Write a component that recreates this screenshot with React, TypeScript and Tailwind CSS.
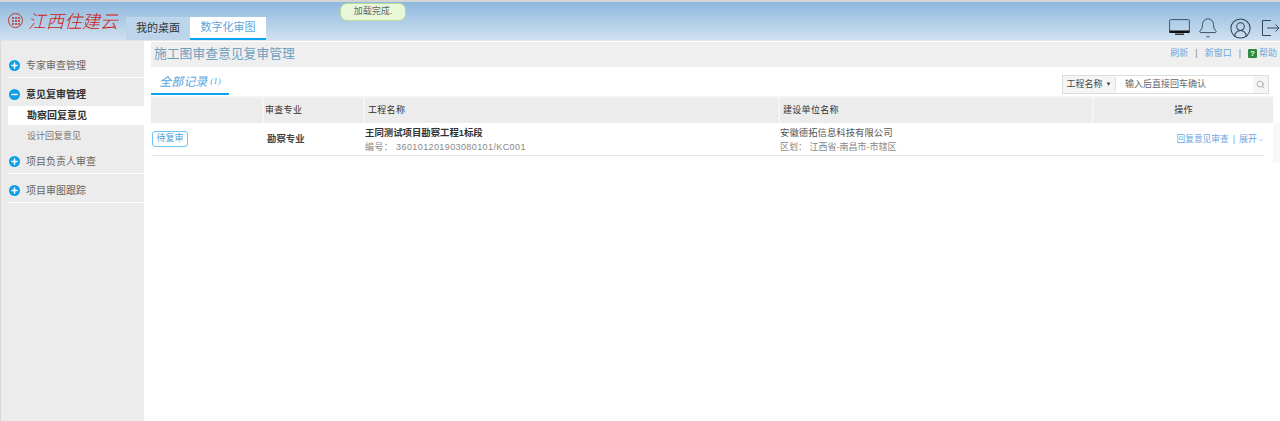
import { Bell, ChevronDown, CircleUserRound, Minus, Plus, Search } from "lucide-react";

const FONT = { fontFamily: '"Liberation Sans", "Noto Sans CJK SC", sans-serif' };

function NavHead({ label, open, line }: { label: string; open?: boolean; line?: boolean }) {
  const Icon = open ? Minus : Plus;
  return (
    <div className={line ? "mt-[4px] flex h-[25px] items-center gap-[6px] border-b border-white pl-[1px]" : "mt-[4px] flex h-[24px] items-center gap-[6px] pl-[1px]"}>
      <span className="flex h-[11px] w-[11px] items-center justify-center rounded-full bg-[#0d9ee6]">
        <Icon className="h-[9px] w-[9px] text-white" strokeWidth={4} />
      </span>
      <span className={open ? "text-[10px] font-bold text-[#333]" : "text-[10px] text-[#666]"}>{label}</span>
    </div>
  );
}

export default function App() {
  return (
    <div className="relative flex h-[421px] w-[1280px] flex-col overflow-hidden bg-white" style={FONT}>
      {/* Header */}
      <header className="flex h-[41px] shrink-0 border-t-2 border-b border-t-[#d5d5d5] border-b-[#dfe5ea] bg-gradient-to-b from-[#8fb8dd] to-[#cfe1f0]">
        <div className="flex w-[126px] items-center pb-[1px] pl-[8px]">
          <span className="flex h-[15px] w-[15px] items-center justify-center rounded-full border border-[#c0392b]">
            <span className="grid grid-cols-3 gap-[1px]">
              {[0, 1, 2, 3, 4, 5, 6, 7, 8].map((i) => (
                <span key={i} className="h-[2px] w-[2px] rounded-full bg-[#b5302a]" />
              ))}
            </span>
          </span>
          <span className="ml-[5px] text-[18px] italic text-[#cc1b10]" style={{ fontFamily: '"Noto Sans CJK SC", sans-serif', fontWeight: 300 }}>
            江西住建云
          </span>
        </div>
        <div className="mt-[15px] flex h-[23px] w-[64px] items-center justify-center bg-[#bcd5ea] text-[11px] text-[#333]">我的桌面</div>
        <div className="mt-[15px] flex h-[23px] w-[76px] items-center justify-center border-b-2 border-[#0aa5f0] bg-white text-[11px] text-[#5aa6dc]">
          数字化审图
        </div>
        <div className="ml-auto flex items-center pt-[14px]">
          <svg width="21" height="18" viewBox="0 0 21 18">
            <rect x="0.6" y="0.6" width="19.8" height="12.8" rx="1" fill="none" stroke="#3f566b" strokeWidth="1" />
            <rect x="0.5" y="11.5" width="20" height="2.5" fill="#111" />
            <rect x="6" y="14.5" width="9" height="1.5" fill="#333" />
          </svg>
          <Bell className="ml-[7px] h-[22px] w-[22px] text-[#34485c]" strokeWidth={1} />
          <CircleUserRound className="ml-[10px] h-[23px] w-[23px] text-[#34485c]" strokeWidth={1.1} />
          <svg className="ml-[9px]" width="19" height="18" viewBox="0 0 19 18" fill="none" stroke="#34485c" strokeWidth="1">
            <path d="M10 1.5H1.5V16.5H10" />
            <path d="M6 9H18M14.5 5.5L18 9L14.5 12.5" />
          </svg>
        </div>
      </header>

      <div className="flex min-h-0 flex-1">
        {/* Sidebar */}
        <aside className="w-[144px] shrink-0 border-l border-[#d9d9d9] bg-[#ececec] pt-[8px]">
          <div className="ml-[7px]">
            <NavHead label="专家审查管理" line />
            <NavHead label="意见复审管理" open />
            <div className="flex h-[19px] items-center bg-white pl-[19px] text-[10px] font-bold text-[#333]">勘察回复意见</div>
            <div className="flex h-[20px] items-center pt-[3px] pl-[19px] text-[9px] text-[#777]">设计回复意见</div>
            <NavHead label="项目负责人审查" line />
            <NavHead label="项目审图跟踪" line />
          </div>
        </aside>

        {/* Main */}
        <main className="ml-[7px] min-w-0 flex-1 pt-[1px]">
          <div className="flex h-[25px] items-center justify-between bg-[#efefef] px-[3px]">
            <h1 className="mb-[1px] text-[12.8px] text-[#6f9fc0]">施工图审查意见复审管理</h1>
            <div className="mb-[2px] flex items-center text-[9px] text-[#6ea5dd]">
              <span>刷新</span>
              <span className="mx-[7px] text-[#888]">|</span>
              <span>新窗口</span>
              <span className="mx-[7px] text-[#888]">|</span>
              <span className="mr-[2px] flex h-[9px] w-[9px] items-center justify-center rounded-[1px] bg-[#2e8b3d] text-[8px] font-bold text-white">?</span>
              <span>帮助</span>
            </div>
          </div>
          <div className="flex h-[28px] items-end justify-between">
            <div className="flex h-[28px] w-[78px] items-center justify-center border-b-[2px] border-[#0aa5f0] pt-[3px] text-[12px] italic text-[#5aa6dc]">
              全部记录<span className="ml-[3px] text-[9px]" style={{ fontFamily: '"Liberation Serif", serif' }}>(1)</span>
            </div>
            <div className="mr-[11px] mb-[1px] flex h-[19px] w-[207px] items-center border border-[#ddd] bg-[#f5f5f5] text-[9px]">
              <span className="flex w-[53px] items-center justify-center gap-[3px] border-r border-[#ddd] text-[#444]">
                工程名称<span className="text-[6px]">▼</span>
              </span>
              <span className="flex h-full flex-1 items-center bg-white pl-[9px] text-[#666]">输入后直接回车确认</span>
              <Search className="mx-[3px] h-[9px] w-[9px] text-[#999]" />
            </div>
          </div>
          <div className="mt-[1px] mr-[7px] grid h-[27px] grid-cols-[111px_101px_415px_314px_181px] items-center border-t-2 border-[#f4f4f4] bg-[#ececec] text-[9px] tracking-[0.3px] text-[#333]">
            <span className="h-full" />
            <span className="flex h-full items-center border-l-2 border-[#f4f4f4] pl-[1px]">审查专业</span>
            <span className="flex h-full items-center border-l-2 border-[#f4f4f4] pl-[3px]">工程名称</span>
            <span className="flex h-full items-center border-l-2 border-[#f4f4f4] pl-[3px]">建设单位名称</span>
            <span className="flex h-full items-center justify-center border-l-2 border-[#f4f4f4]">操作</span>
          </div>
          <div className="relative">
            <div className="mr-[16px] grid h-[33px] grid-cols-[116px_98px_415px_306px_178px] items-center border-b border-[#e8e8e8] pt-[1px] text-[9.4px]">
              <div className="mb-[2px] pl-[1px]">
                <span className="flex h-[16px] w-[36px] items-center justify-center rounded-[3px] border border-[#6cc5f2] text-[9px] text-[#4aa3dc]">待复审</span>
              </div>
              <span className="font-bold text-[#444]">勘察专业</span>
              <div className="flex flex-col gap-[3px]">
                <span className="font-bold leading-[13px] text-[#333]">王同测试项目勘察工程1标段</span>
                <span className="text-[9px] leading-[11px] tracking-[0.4px] text-[#888]">编号： 360101201903080101/KC001</span>
              </div>
              <div className="flex flex-col gap-[3px]">
                <span className="leading-[13px] text-[#555]">安徽德拓信息科技有限公司</span>
                <span className="text-[9px] leading-[11px] text-[#888]">区划： 江西省-南昌市-市辖区</span>
              </div>
              <div className="flex items-center justify-end text-[9px] text-[#6ea5dd]">
                <span className="text-[8.7px]">回复意见审查</span>
                <span className="mx-[4px]">|</span>
                <span>展开</span>
                <ChevronDown className="mr-[-1px] h-[8px] w-[8px]" strokeWidth={1.5} />
              </div>
            </div>
            <div className="absolute top-0 right-0 h-[40px] w-[7px] bg-[#f8f8f8]" />
          </div>
        </main>
      </div>

      {/* Toast */}
      <div className="absolute top-[3px] left-[340px] flex h-[18px] w-[66px] items-center justify-center rounded-[7px] border border-[#b9dc9d] bg-[#e9f7d9] text-[9px] text-[#666]">
        加载完成.
      </div>
    </div>
  );
}
